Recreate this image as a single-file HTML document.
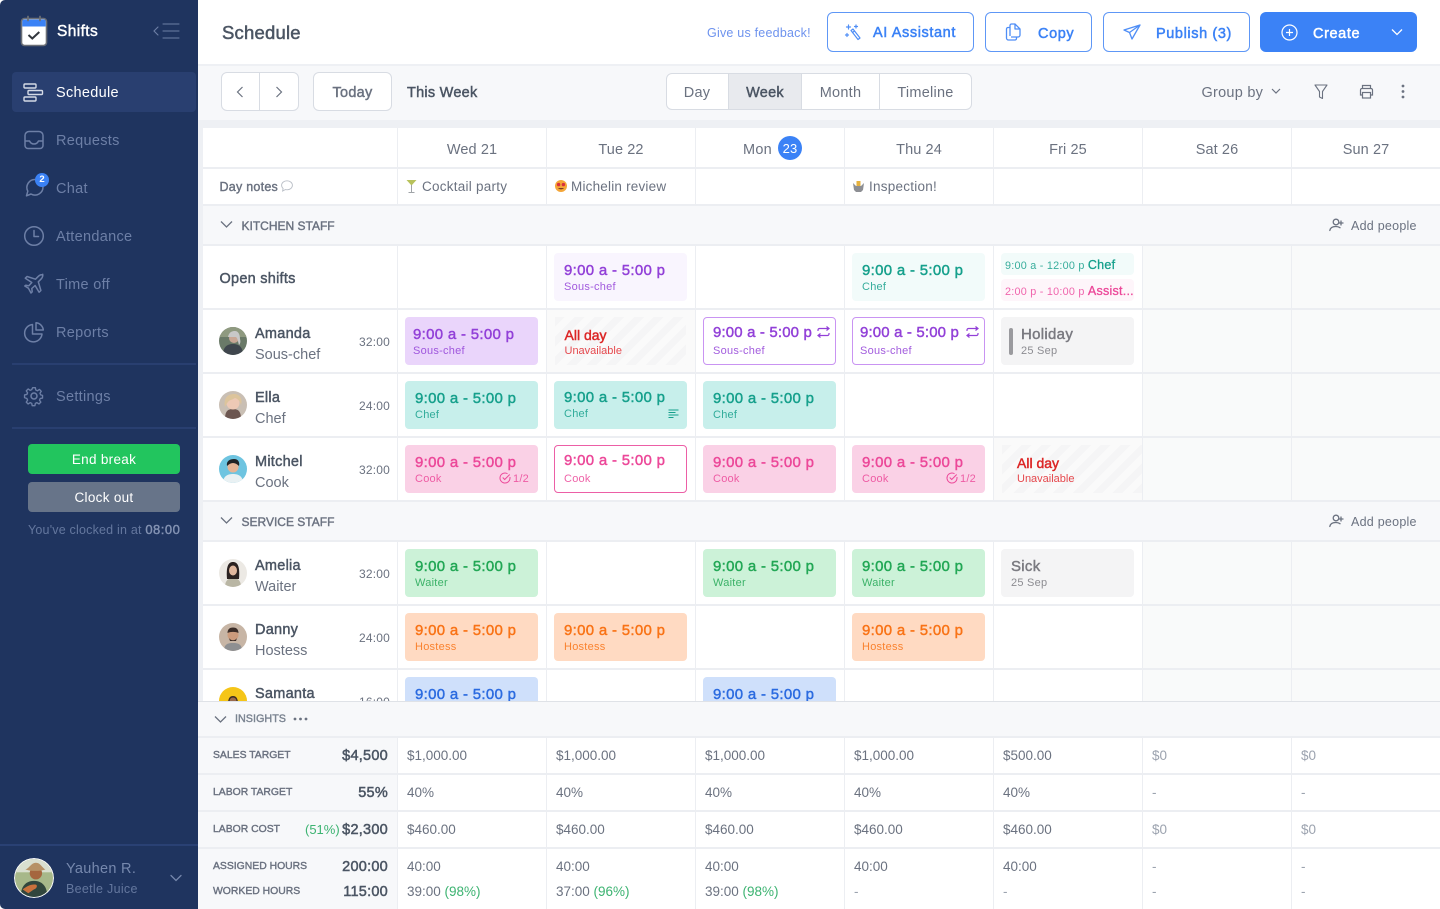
<!DOCTYPE html>
<html lang="en"><head><meta charset="utf-8"><title>Shifts</title>
<style>
*{box-sizing:border-box}
html,body{margin:0;padding:0;width:1440px;height:909px;overflow:hidden;background:#fff}
body{position:relative;font-family:"Liberation Sans",sans-serif;color:#4b5563}
.a{position:absolute}
.t{position:absolute;line-height:20px;margin-top:-10px;white-space:nowrap;font-size:14.5px;letter-spacing:.25px}
.m{-webkit-text-stroke:.45px currentColor}
.c{transform:translateX(-50%)}
svg{position:absolute;overflow:visible}
svg.ph{overflow:hidden;border-radius:50%}
.n{color:#6d7fa6;left:56px;font-size:14.5px;letter-spacing:.3px}
.ic{fill:none;stroke:#6d7fa6;stroke-width:1.5;stroke-linecap:round;stroke-linejoin:round}
.btn{position:absolute;top:12px;height:40px;border:1.5px solid #5e97f6;border-radius:6px;background:#fff}
.bt{color:#3b82f6;font-size:14.5px;letter-spacing:.6px;-webkit-text-stroke:.5px currentColor}
.hl{position:absolute;background:#eceef2}
.s{position:absolute;width:133px;height:48px;border-radius:4px;overflow:hidden}
.s b{position:absolute;left:10px;top:8px;line-height:20px;font-size:15px;font-weight:400;letter-spacing:.3px;-webkit-text-stroke:.45px currentColor;white-space:nowrap}
.s i{position:absolute;left:10px;top:27px;line-height:14px;font-size:11px;font-style:normal;letter-spacing:.25px;white-space:nowrap;opacity:.85}
.pu{background:#ead5fb;color:#9240d8}.pl{background:#f9f5fe;color:#9240d8}
.po{background:#fff;border:1.5px solid #c994f2;color:#9240d8}
.po b{letter-spacing:.15px}
.te{background:#c7efeb;color:#16a08c}.tl{background:#f2fbfa;color:#16a08c}
.pk{background:#fad1e6;color:#ec4899}.pw{background:#fff;border:1.5px solid #ec5fa6;color:#ec4899}
.gr{background:#ccf2d8;color:#22a755}.or{background:#ffdac2;color:#f97316}
.bl{background:#cfe0fb;color:#2b6be0}.gy{background:#f4f4f5;color:#7a7a80}
.st{position:absolute;height:48px;background:repeating-linear-gradient(135deg,#f5f5f6 0 7px,#fafafa 7px 14px)}
.head{color:#6b7280;font-size:14.5px;letter-spacing:.1px}
.name{left:255px;font-size:14.5px;color:#4b5563;-webkit-text-stroke:.45px currentColor}
.role{left:255px;font-size:14.5px;color:#6b7280;letter-spacing:0}
.hrs{left:359px;font-size:12px;color:#6b7280;letter-spacing:.2px}
.sec{font-size:12px;color:#6b7280;letter-spacing:0;-webkit-text-stroke:.4px currentColor}
.lab{left:213px;font-size:10.4px;color:#6b7280;letter-spacing:0;-webkit-text-stroke:.4px currentColor}
.tot{right:1052px;font-size:14.5px;color:#4b5563;-webkit-text-stroke:.5px currentColor}
.v{font-size:13.5px;color:#6b7280;letter-spacing:0}
.f{color:#9ca3af}
.ga{fill:none;stroke:#6b7280;stroke-width:1.3;stroke-linecap:round;stroke-linejoin:round}
</style></head><body>

<!-- backgrounds -->
<div class="a" style="left:198px;top:64px;width:1242px;height:845px;background:#eef0f4"></div>
<div class="a" style="left:198px;top:0;width:1242px;height:64px;background:#fff"></div>
<div class="a" style="left:198px;top:66px;width:1242px;height:54px;background:#f7f8fa"></div>
<div class="a" style="left:203px;top:128px;width:1237px;height:573px;background:#fff"></div>
<div class="a" style="left:1142px;top:245px;width:298px;height:456px;background:#f9fafa"></div>
<div class="a" style="left:203px;top:205px;width:1237px;height:40px;background:#f7f8fa"></div>
<div class="a" style="left:203px;top:501px;width:1237px;height:40px;background:#f7f8fa"></div>
<div class="a" style="left:546px;top:309px;width:149px;height:64px;background:#fafafa"></div>
<div class="a" style="left:993px;top:437px;width:149px;height:64px;background:#fafafa"></div>

<!-- grid lines -->
<div class="hl" style="left:203px;top:167px;width:1237px;height:2px"></div>
<div class="hl" style="left:203px;top:204px;width:1237px;height:1.5px"></div>
<div class="hl" style="left:203px;top:244px;width:1237px;height:2px"></div>
<div class="hl" style="left:203px;top:308px;width:1237px;height:2px"></div>
<div class="hl" style="left:203px;top:372px;width:1237px;height:2px"></div>
<div class="hl" style="left:203px;top:436px;width:1237px;height:2px"></div>
<div class="hl" style="left:203px;top:500px;width:1237px;height:1.5px"></div>
<div class="hl" style="left:203px;top:540px;width:1237px;height:2px"></div>
<div class="hl" style="left:203px;top:604px;width:1237px;height:2px"></div>
<div class="hl" style="left:203px;top:668px;width:1237px;height:2px"></div>
<div class="hl" style="left:396.5px;top:128px;width:1.3px;height:77px"></div>
<div class="hl" style="left:545.5px;top:128px;width:1.3px;height:77px"></div>
<div class="hl" style="left:694.5px;top:128px;width:1.3px;height:77px"></div>
<div class="hl" style="left:843.5px;top:128px;width:1.3px;height:77px"></div>
<div class="hl" style="left:992.5px;top:128px;width:1.3px;height:77px"></div>
<div class="hl" style="left:1141.5px;top:128px;width:1.3px;height:77px"></div>
<div class="hl" style="left:1290.5px;top:128px;width:1.3px;height:77px"></div>
<div class="hl" style="left:397px;top:245px;width:1.3px;height:256px"></div>
<div class="hl" style="left:546px;top:245px;width:1.3px;height:256px"></div>
<div class="hl" style="left:695px;top:245px;width:1.3px;height:256px"></div>
<div class="hl" style="left:844px;top:245px;width:1.3px;height:256px"></div>
<div class="hl" style="left:993px;top:245px;width:1.3px;height:256px"></div>
<div class="hl" style="left:1142px;top:245px;width:1.3px;height:256px"></div>
<div class="hl" style="left:1291px;top:245px;width:1.3px;height:256px"></div>
<div class="hl" style="left:397px;top:541px;width:1.3px;height:160px"></div>
<div class="hl" style="left:546px;top:541px;width:1.3px;height:160px"></div>
<div class="hl" style="left:695px;top:541px;width:1.3px;height:160px"></div>
<div class="hl" style="left:844px;top:541px;width:1.3px;height:160px"></div>
<div class="hl" style="left:993px;top:541px;width:1.3px;height:160px"></div>
<div class="hl" style="left:1142px;top:541px;width:1.3px;height:160px"></div>
<div class="hl" style="left:1291px;top:541px;width:1.3px;height:160px"></div>

<!-- sidebar -->
<div class="a" style="left:0;top:0;width:198px;height:909px;background:#1f345f;border-radius:5px 0 0 5px"></div>
<svg style="left:20px;top:15px" width="28" height="32" viewBox="0 0 28 32"><rect x="1.5" y="3.5" width="25" height="27" rx="3" fill="#fff" stroke="#6b6f76" stroke-width="1.6"/><path d="M2.3 6.5a2 2 0 0 1 2-2h19.4a2 2 0 0 1 2 2v5H2.3z" fill="#3b82f6"/><path d="M8 1.5v4M20 1.5v4" stroke="#6b6f76" stroke-width="1.8" stroke-linecap="round"/><path d="M8.5 20l3.8 3.5 7-6.5" fill="none" stroke="#33373d" stroke-width="2"/></svg>
<div class="t" style="left:57px;top:32px;color:#fff;font-size:15.5px;-webkit-text-stroke:.45px #fff;letter-spacing:.4px">Shifts</div>
<svg style="left:152px;top:23px" width="28" height="16" viewBox="0 0 28 16"><path d="M6 4L2 8l4 4M11 1h16M11 8h16M11 15h16" fill="none" stroke="#6d7fa6" stroke-width="1.1" stroke-linecap="round"/></svg>

<div class="a" style="left:12px;top:72px;width:184px;height:40px;background:#293f70;border-radius:4px"></div>
<svg style="left:23px;top:83px" width="21" height="19" viewBox="0 0 21 19"><g fill="none" stroke="#d4dae6" stroke-width="1.4"><rect x="1" y="1" width="12" height="4" rx="1"/><rect x="5" y="7.5" width="14.5" height="4" rx="1"/><rect x="1" y="14" width="12" height="4" rx="1"/></g></svg>
<div class="t" style="left:56px;top:93px;color:#fff;font-size:14.5px;letter-spacing:.3px">Schedule</div>

<svg class="ic" style="left:24px;top:130px" width="20" height="20" viewBox="0 0 20 20"><path d="M1 11V5.5A4 4 0 0 1 5 1.5h10a4 4 0 0 1 4 4V11M1 11v4.5a3 3 0 0 0 3 3h12a3 3 0 0 0 3-3V11h-4.5c-1 2-2.5 3-4.500 3s-3.500-1-4.500-3z"/></svg>
<div class="t n" style="top:141px">Requests</div>

<svg class="ic" style="left:25px;top:178px" width="20" height="20" viewBox="0 0 20 20"><path d="M18 9a8 8 0 0 1-12 7l-4.500 1.800 1.300-4.600A8 8 0 0 1 10 1.500"/></svg>
<div class="a" style="left:35px;top:173px;width:14px;height:14px;border-radius:50%;background:#3b82f6;color:#fff;font-size:9.5px;font-weight:bold;text-align:center;line-height:14px">2</div>
<div class="t n" style="top:189px">Chat</div>

<svg class="ic" style="left:24px;top:226px" width="20" height="20" viewBox="0 0 20 20"><circle cx="10" cy="10" r="9.3"/><path d="M10 4.5V10.500h4.500"/></svg>
<div class="t n" style="top:237px">Attendance</div>

<svg class="ic" style="left:24px;top:274px" width="20" height="20" viewBox="0 0 20 20"><path d="M18.700 1.300c-1.300-1-3-.3-4.300 1L11.500 5.200 3 2.500 1.300 4.200l6.500 4.300-3 3.300-3-.6L.8 12l3.600 2.200L7 19l1.200-1.200-.4-3.300 3.300-3 4 6.700 1.800-1.700-2.600-8.700 3-3c1.200-1.200 1.700-3.300 1.400-4.500z"/></svg>
<div class="t n" style="top:285px">Time off</div>

<svg class="ic" style="left:24px;top:322px" width="20" height="20" viewBox="0 0 20 20"><path d="M8.500 2.500a8.700 8.700 0 1 0 9.500 9.500H8.500zM12 .8A8 8 0 0 1 19.300 8H12z"/></svg>
<div class="t n" style="top:333px">Reports</div>

<div class="a" style="left:12px;top:363px;width:184px;height:2px;background:#293f70"></div>
<svg class="ic" style="left:24px;top:386px" width="20" height="20" viewBox="0 0 20 20"><circle cx="10" cy="10" r="3"/><path d="M8.500 1h3l.5 2.600 1.800.8 2.200-1.500 2.100 2.100-1.500 2.200.8 1.800L19.500 9.500v3l-2.600.5-.8 1.800 1.500 2.200-2.100 2.100-2.200-1.500-1.800.8-.5 2.600h-3L7.500 18.400l-1.800-.8-2.200 1.500-2.100-2.100 1.500-2.200-.8-1.800L-.5 12V9l2.600-.5.800-1.800L1.400 4.500 3.500 2.400l2.200 1.500 1.800-.8z" transform="translate(1 .8) scale(.9)"/></svg>
<div class="t n" style="top:397px">Settings</div>
<div class="a" style="left:12px;top:427px;width:184px;height:2px;background:#293f70"></div>

<div class="a" style="left:28px;top:444px;width:152px;height:30px;border-radius:4px;background:#22c55e"></div>
<div class="t c" style="left:104px;top:460px;color:#fff;font-size:13.5px;letter-spacing:.3px">End break</div>
<div class="a" style="left:28px;top:482px;width:152px;height:30px;border-radius:4px;background:#677489"></div>
<div class="t c" style="left:104px;top:498px;color:#fff;font-size:13.5px;letter-spacing:.3px">Clock out</div>
<div class="t" style="left:28px;top:530px;color:#64779e;font-size:12.5px;letter-spacing:.2px">You've clocked in at <span style="-webkit-text-stroke:.4px currentColor;color:#8493b3;font-size:13px;letter-spacing:.5px">08:00</span></div>

<div class="a" style="left:0;top:844px;width:198px;height:1.5px;background:#2a4174"></div>
<svg class="ph" style="left:14px;top:858px" width="40" height="40" viewBox="0 0 40 40"><circle cx="20" cy="20" r="20" fill="#fff"/><g transform="translate(1 1) scale(.95)"><clipPath id="u"><circle cx="20" cy="20" r="20"/></clipPath><g clip-path="url(#u)"><rect width="40" height="40" fill="#a7b88a"/><rect width="40" height="14" fill="#d9dfd0"/><path d="M6 40c0-12 6-17 14-17s14 5 14 17z" fill="#31463d"/><circle cx="22" cy="15" r="6.500" fill="#a5663f"/><path d="M11 11c4-1 6-7 11-7s6 5 10 7c-6 2-15 2-21 0z" fill="#b69166"/><path d="M8 32c4-3 9-6 14-5 2 1 1 4-2 5l-6 4z" fill="#c9713c"/></g></g></svg>
<div class="t" style="left:66px;top:869px;color:#7688ad;font-size:14.5px;letter-spacing:.3px">Yauhen R.</div>
<div class="t" style="left:66px;top:889px;color:#64779e;font-size:12.5px;letter-spacing:.3px">Beetle Juice</div>
<svg style="left:170px;top:874px" width="12" height="8" viewBox="0 0 12 8"><path d="M1 1.500l5 5 5-5" fill="none" stroke="#7688ad" stroke-width="1.300" stroke-linecap="round"/></svg>

<!-- header -->
<div class="t" style="left:222px;top:32.500px;font-size:18.500px;color:#4b5563;-webkit-text-stroke:.5px currentColor;letter-spacing:.2px">Schedule</div>
<div class="t" style="left:707px;top:33px;color:#6e93ee;font-size:12.5px;letter-spacing:.22px">Give us feedback!</div>
<div class="btn" style="left:827px;width:147px"></div>
<svg style="left:845px;top:24px" width="17" height="17" viewBox="0 0 17 17"><g fill="none" stroke="#4f8ef6" stroke-width="1.200" stroke-linecap="round" stroke-linejoin="round"><path d="M6 6.500l2-1.500 7 9-2 1.500zM7.500 8.500l2-1.500"/><path d="M3.500 1v4M1.500 3h4M11 1v3M9.500 2.500h3M2 9.500v3M.5 11h3"/></g></svg>
<div class="t bt" style="left:873px;top:33px">AI Assistant</div>
<div class="btn" style="left:985px;width:107px"></div>
<svg style="left:1005px;top:23px" width="17" height="18" viewBox="0 0 17 18"><g fill="none" stroke="#4f8ef6" stroke-width="1.300" stroke-linejoin="round"><path d="M5 13V2.500A1.500 1.500 0 0 1 6.500 1H10l5 5v6a2 2 0 0 1-2 2H6"/><path d="M10 1v5h5"/><path d="M5 4.500H3A1.500 1.500 0 0 0 1.500 6v9A2 2 0 0 0 3.500 17H10a1.500 1.500 0 0 0 1.500-1.500V14"/></g></svg>
<div class="t bt" style="left:1038px;top:33.500px">Copy</div>
<div class="btn" style="left:1103px;width:147px"></div>
<svg style="left:1123px;top:24px" width="18" height="17" viewBox="0 0 18 17"><path d="M17 1L1 6l5.500 2.500L9 15zM6.500 8.500L17 1" fill="none" stroke="#4f8ef6" stroke-width="1.300" stroke-linejoin="round"/></svg>
<div class="t bt" style="left:1156px;top:33.500px">Publish (3)</div>
<div class="a" style="left:1260px;top:12px;width:157px;height:40px;border-radius:6px;background:#3b82f6"></div>
<svg style="left:1281px;top:24px" width="17" height="17" viewBox="0 0 17 17"><circle cx="8.500" cy="8.500" r="7.500" fill="none" stroke="#fff" stroke-width="1.200"/><path d="M8.500 5v7M5 8.500h7" stroke="#fff" stroke-width="1.200"/></svg>
<div class="t bt" style="left:1313px;top:33.500px;color:#fff">Create</div>
<svg style="left:1391px;top:28px" width="12" height="8" viewBox="0 0 12 8"><path d="M1 1.500l5 5 5-5" fill="none" stroke="#fff" stroke-width="1.300"/></svg>

<!-- toolbar -->
<div class="a" style="left:221px;top:72px;width:78px;height:39px;background:#fff;border:1px solid #d8dce3;border-radius:6px"></div>
<div class="a" style="left:259px;top:72px;width:1px;height:39px;background:#d8dce3"></div>
<svg style="left:236px;top:86px" width="8" height="12" viewBox="0 0 8 12"><path d="M6.500 1L1.500 6l5 5" fill="none" stroke="#6b7280" stroke-width="1.200"/></svg>
<svg style="left:275px;top:86px" width="8" height="12" viewBox="0 0 8 12"><path d="M1.500 1l5 5-5 5" fill="none" stroke="#6b7280" stroke-width="1.200"/></svg>
<div class="a" style="left:313px;top:72px;width:79px;height:39px;background:#fff;border:1px solid #d8dce3;border-radius:6px"></div>
<div class="t c m" style="left:352.500px;top:92.500px;color:#6b7280;font-size:14.5px">Today</div>
<div class="t m" style="left:407px;top:92.500px;color:#4b5563;font-size:14.5px">This Week</div>

<div class="a" style="left:666px;top:73px;width:306px;height:37px;background:#fff;border:1px solid #d8dce3;border-radius:6px;overflow:hidden"><div class="a" style="left:61px;top:0;width:73px;height:35px;background:#e8eaee"></div></div>
<div class="a" style="left:728px;top:73px;width:1px;height:37px;background:#d8dce3"></div>
<div class="a" style="left:801px;top:73px;width:1px;height:37px;background:#d8dce3"></div>
<div class="a" style="left:879px;top:73px;width:1px;height:37px;background:#d8dce3"></div>
<div class="t c" style="left:697px;top:92.500px;color:#6b7280;font-size:14.5px">Day</div>
<div class="t c m" style="left:765px;top:92.500px;color:#4b5563;font-size:14.5px">Week</div>
<div class="t c" style="left:840.500px;top:92.500px;color:#6b7280;font-size:14.5px">Month</div>
<div class="t c" style="left:925.500px;top:92.500px;color:#6b7280;font-size:14.5px">Timeline</div>
<div class="t" style="left:1201.500px;top:92.500px;color:#6b7280;font-size:14.5px">Group by</div>
<svg style="left:1271px;top:88px" width="10" height="7" viewBox="0 0 10 7"><path d="M1 1l4 4 4-4" fill="none" stroke="#6b7280" stroke-width="1.200"/></svg>
<svg style="left:1314px;top:84px" width="14" height="16" viewBox="0 0 14 16"><path d="M1 1h12L8.500 7.500v7L5.500 13V7.500z" fill="none" stroke="#6b7280" stroke-width="1.100" stroke-linejoin="round"/></svg>
<svg style="left:1359px;top:84px" width="15" height="15" viewBox="0 0 15 15"><g fill="none" stroke="#6b7280" stroke-width="1.200"><path d="M3.500 4.500V1.500h8v3M3.500 11H1.500V6a1.500 1.500 0 0 1 1.500-1.500h9A1.500 1.500 0 0 1 13.500 6v5h-2"/><rect x="3.500" y="8.500" width="8" height="5.500"/></g></svg>
<svg style="left:1401px;top:84px" width="4" height="15" viewBox="0 0 4 15"><g fill="#6b7280"><circle cx="2" cy="2" r="1.400"/><circle cx="2" cy="7.500" r="1.400"/><circle cx="2" cy="13" r="1.400"/></g></svg>

<!-- day header -->
<div class="t c head" style="left:472px;top:149.500px">Wed 21</div>
<div class="t c head" style="left:621px;top:149.500px">Tue 22</div>
<div class="t head" style="left:743px;top:149.500px;letter-spacing:.25px">Mon</div>
<div class="a" style="left:778px;top:136px;width:24px;height:24px;border-radius:50%;background:#3b82f6;color:#fff;font-size:13px;text-align:center;line-height:25px;letter-spacing:.2px">23</div>
<div class="t c head" style="left:919px;top:149.500px">Thu 24</div>
<div class="t c head" style="left:1068px;top:149.500px">Fri 25</div>
<div class="t c head" style="left:1217px;top:149.500px">Sat 26</div>
<div class="t c head" style="left:1366px;top:149.500px">Sun 27</div>

<!-- notes -->
<div class="t" style="left:219.500px;top:187px;font-size:12.5px;color:#6b7280;-webkit-text-stroke:.4px currentColor">Day notes</div>
<svg style="left:281px;top:180px" width="12" height="12" viewBox="0 0 12 12"><path d="M6 .8C2.900.8.600 2.800.600 5.300c0 1.300.6 2.400 1.500 3.200L1.600 11l2.700-1.400c.5.100 1.100.2 1.700.2 3.100 0 5.400-2 5.400-4.500S9.100.8 6 .8z" fill="none" stroke="#b9bec6" stroke-width=".9"/></svg>
<svg style="left:406px;top:180px" width="11" height="13" viewBox="0 0 11 13"><path d="M.5 0h10L5.500 5.500z" fill="#b8c25c"/><path d="M5.500 5v7M2.500 12.500h6" stroke="#a0a4a8" stroke-width="1"/></svg>
<div class="t" style="left:422px;top:186.500px;font-size:13.5px;color:#6b7280;letter-spacing:.25px">Cocktail party</div>
<svg style="left:555px;top:180px" width="12" height="12" viewBox="0 0 12 12"><circle cx="6" cy="6" r="6" fill="#f4a638"/><circle cx="3.600" cy="4.600" r="1.700" fill="#d92f3d"/><circle cx="8.400" cy="4.600" r="1.700" fill="#d92f3d"/><path d="M3 8c1.500 1.800 4.500 1.800 6 0z" fill="#7a3a20"/></svg>
<div class="t" style="left:571px;top:186.500px;font-size:13.5px;color:#6b7280;letter-spacing:.2px">Michelin review</div>
<svg style="left:852px;top:180px" width="13" height="13" viewBox="0 0 13 13"><path d="M1 3l3 3h5l3-3-1 7-2 2H4l-2-2z" fill="#8d8f94"/><rect x="4.500" y="1" width="4" height="5" fill="#e6b23e"/></svg>
<div class="t" style="left:869px;top:186.500px;font-size:13.5px;color:#6b7280;letter-spacing:.25px">Inspection!</div>

<!-- section headers -->
<svg style="left:220px;top:220px" width="13" height="9" viewBox="0 0 13 9"><path d="M1 1.500l5.500 5.500L12 1.500" fill="none" stroke="#6b7280" stroke-width="1.300"/></svg>
<div class="t sec" style="left:241.500px;top:225.500px">KITCHEN STAFF</div>
<svg class="ga" style="left:1329px;top:218px" width="15" height="14" viewBox="0 0 15 14"><circle cx="7" cy="4" r="2.800"/><path d="M.8 12.500c.5-3 3-4 6-4 1.500 0 3 .3 4.200 1.200M12 3v4M10 5h4"/></svg>
<div class="t" style="left:1351px;top:226px;font-size:12.5px;color:#6b7280;letter-spacing:.25px">Add people</div>
<svg style="left:220px;top:516px" width="13" height="9" viewBox="0 0 13 9"><path d="M1 1.500l5.500 5.500L12 1.500" fill="none" stroke="#6b7280" stroke-width="1.300"/></svg>
<div class="t sec" style="left:241.500px;top:521.500px">SERVICE STAFF</div>
<svg class="ga" style="left:1329px;top:514px" width="15" height="14" viewBox="0 0 15 14"><circle cx="7" cy="4" r="2.800"/><path d="M.8 12.500c.5-3 3-4 6-4 1.500 0 3 .3 4.200 1.200M12 3v4M10 5h4"/></svg>
<div class="t" style="left:1351px;top:522px;font-size:12.5px;color:#6b7280;letter-spacing:.25px">Add people</div>

<!-- people -->
<div class="t m" style="left:219.500px;top:278.500px;font-size:14.5px;color:#4b5563">Open shifts</div>

<svg class="ph" style="left:219px;top:327px" width="28" height="28" viewBox="0 0 28 28"><rect width="28" height="28" fill="#6a7a68"/><rect width="28" height="10" fill="#8f9a80"/><path d="M4 28c0-8 4-11 10-11s10 3 10 11z" fill="#3f464d"/><circle cx="15" cy="11" r="5" fill="#c9a795"/><path d="M9 10c1-5 4-6 7-6s5 3 5 8c1 3 0 5-1 6-1-3-1-6-3-8-3 0-6 0-8 0z" fill="#c8c8c8"/></svg>
<div class="t name" style="top:333.500px">Amanda</div><div class="t role" style="top:354.500px">Sous-chef</div><div class="t hrs" style="top:342px">32:00</div>

<svg class="ph" style="left:219px;top:391px" width="28" height="28" viewBox="0 0 28 28"><rect width="28" height="28" fill="#c9bfb4"/><path d="M6 28c0-8 3-10 8-10s8 2 8 10z" fill="#6c5650"/><circle cx="14" cy="12" r="6.500" fill="#edc9b5"/><path d="M6 16C4 6 10 3 15 3s9 4 7 11c-1-4-3-6-6-7-3 2-6 2-7 4-1 1-2 3-3 5z" fill="#dcc49b"/></svg>
<div class="t name" style="top:397.500px">Ella</div><div class="t role" style="top:418.500px">Chef</div><div class="t hrs" style="top:406px">24:00</div>

<svg class="ph" style="left:219px;top:455px" width="28" height="28" viewBox="0 0 28 28"><rect width="28" height="28" fill="#6ec4e0"/><path d="M4 28c0-7 5-9 10-9s10 2 10 9z" fill="#e9f1f3"/><circle cx="14" cy="12" r="5.500" fill="#e5b596"/><path d="M8 11c-1-5 3-7 7-7s6 3 5 7c-2-2-4-3-6-3s-4 1-6 3z" fill="#1f2326"/></svg>
<div class="t name" style="top:461.500px">Mitchel</div><div class="t role" style="top:482.500px">Cook</div><div class="t hrs" style="top:470px">32:00</div>

<svg class="ph" style="left:219px;top:559px" width="28" height="28" viewBox="0 0 28 28"><rect width="28" height="28" fill="#ece9e4"/><path d="M6 28c0-7 4-9 8-9s8 2 8 9z" fill="#b9b6a4"/><path d="M8 20C7 8 9 3 14 3s7 5 6 17z" fill="#2b2220"/><ellipse cx="14" cy="11.500" rx="4" ry="5" fill="#e0b79d"/></svg>
<div class="t name" style="top:565.500px">Amelia</div><div class="t role" style="top:586.500px">Waiter</div><div class="t hrs" style="top:574px">32:00</div>

<svg class="ph" style="left:219px;top:623px" width="28" height="28" viewBox="0 0 28 28"><rect width="28" height="28" fill="#c7b5a5"/><path d="M5 28c0-7 4-8 9-8s9 1 9 8z" fill="#8e8f91"/><circle cx="14" cy="12" r="5.500" fill="#cc9b7c"/><path d="M8.500 10c0-4 2.500-5.500 5.500-5.500s5.500 1.500 5.500 5.500c-3-1.500-8-1.500-11 0zM10 15c2 3 6 3 8 0l-1 3h-6z" fill="#3b2d28"/></svg>
<div class="t name" style="top:629.500px">Danny</div><div class="t role" style="top:650.500px">Hostess</div><div class="t hrs" style="top:638px">24:00</div>

<svg class="ph" style="left:219px;top:687px" width="28" height="28" viewBox="0 0 28 28"><rect width="28" height="28" fill="#f5c518"/><path d="M9 17c0-6 2-8 5-8s5 2 5 8z" fill="#3a2a22"/><circle cx="14" cy="14" r="3.500" fill="#9a6b4f"/></svg>
<div class="t name" style="top:693.500px">Samanta</div><div class="t hrs" style="top:702px">16:00</div>

<!-- shifts kitchen -->
<div class="s pl" style="left:554px;top:253px"><b>9:00 a - 5:00 p</b><i>Sous-chef</i></div>
<div class="s tl" style="left:852px;top:253px"><b>9:00 a - 5:00 p</b><i>Chef</i></div>
<div class="a" style="left:1001px;top:253px;width:133px;height:22px;border-radius:4px;background:#f2fbfa"></div>
<div class="t" style="left:1005px;top:264.500px;font-size:10.8px;color:#38ad9c">9:00 a - 12:00 p <span style="font-size:12.5px;color:#16a08c;-webkit-text-stroke:.3px currentColor">Chef</span></div>
<div class="a" style="left:1001px;top:279px;width:133px;height:22px;border-radius:4px;background:#fef5fa"></div>
<div class="t" style="left:1005px;top:290.500px;font-size:10.8px;color:#f065ad">2:00 p - 10:00 p <span style="font-size:12.5px;color:#ec4899;-webkit-text-stroke:.3px currentColor">Assist...</span></div>

<div class="s pu" style="left:405px;top:317px"><b style="left:8px">9:00 a - 5:00 p</b><i style="left:8px">Sous-chef</i></div>
<div class="st" style="left:555px;top:317px;width:131px"></div>
<div class="t m" style="left:564.500px;top:335px;font-size:14px;color:#dc2626;letter-spacing:0">All day</div>
<div class="t" style="left:564.500px;top:351px;font-size:11px;color:#e5484d;letter-spacing:0">Unavailable</div>
<div class="s po" style="left:703px;top:317px"><b style="left:9px;top:5px">9:00 a - 5:00 p</b><i style="left:9px;top:26px">Sous-chef</i><svg style="left:113px;top:8px" width="13" height="12" viewBox="0 0 13 12"><path d="M1 5V4a1.500 1.500 0 0 1 1.500-1.500H12M9.500.5l2.500 2-2.500 2M12 7v1a1.500 1.500 0 0 1-1.500 1.500H1M3.500 7.500L1 9.500l2.500 2" fill="none" stroke="#9240d8" stroke-width="1.200"/></svg></div>
<div class="s po" style="left:852px;top:317px"><b style="left:7px;top:5px">9:00 a - 5:00 p</b><i style="left:7px;top:26px">Sous-chef</i><svg style="left:113px;top:8px" width="13" height="12" viewBox="0 0 13 12"><path d="M1 5V4a1.500 1.500 0 0 1 1.500-1.500H12M9.500.5l2.500 2-2.500 2M12 7v1a1.500 1.500 0 0 1-1.500 1.500H1M3.500 7.500L1 9.500l2.500 2" fill="none" stroke="#9240d8" stroke-width="1.200"/></svg></div>
<div class="s gy" style="left:1001px;top:317px"><div class="a" style="left:8px;top:11px;width:4px;height:27px;border-radius:2px;background:#9a9a9e"></div><b style="left:20px;top:8px">Holiday</b><i style="left:20px;top:27px">25 Sep</i></div>

<div class="s te" style="left:405px;top:381px"><b>9:00 a - 5:00 p</b><i>Chef</i></div>
<div class="s te" style="left:554px;top:381px"><b style="top:7px">9:00 a - 5:00 p</b><i style="top:26px">Chef</i><svg style="left:114px;top:28px" width="11" height="9" viewBox="0 0 11 9"><path d="M.5 1h10M.5 3.500h7M.5 6h10M.5 8.500h5" stroke="#16a08c" stroke-width="1"/></svg></div>
<div class="s te" style="left:703px;top:381px"><b>9:00 a - 5:00 p</b><i>Chef</i></div>

<div class="s pk" style="left:405px;top:445px"><b>9:00 a - 5:00 p</b><i>Cook</i><svg style="left:94px;top:27px" width="12" height="12" viewBox="0 0 12 12"><path d="M11 5v1a5 5 0 1 1-2.500-4.300M3.700 5.500l2 2 5-5" fill="none" stroke="#ec4899" stroke-width="1"/></svg><i style="left:108px;font-size:11px">1/2</i></div>
<div class="s pw" style="left:554px;top:445px"><b style="left:9px;top:5px">9:00 a - 5:00 p</b><i style="left:9px;top:26px">Cook</i></div>
<div class="s pk" style="left:703px;top:445px"><b>9:00 a - 5:00 p</b><i>Cook</i></div>
<div class="s pk" style="left:852px;top:445px"><b>9:00 a - 5:00 p</b><i>Cook</i><svg style="left:94px;top:27px" width="12" height="12" viewBox="0 0 12 12"><path d="M11 5v1a5 5 0 1 1-2.500-4.300M3.700 5.500l2 2 5-5" fill="none" stroke="#ec4899" stroke-width="1"/></svg><i style="left:108px;font-size:11px">1/2</i></div>
<div class="st" style="left:1002px;top:445px;width:140px"></div>
<div class="t m" style="left:1017px;top:463px;font-size:14px;color:#dc2626;letter-spacing:0">All day</div>
<div class="t" style="left:1017px;top:479px;font-size:11px;color:#e5484d;letter-spacing:0">Unavailable</div>

<!-- service -->
<div class="s gr" style="left:405px;top:549px"><b>9:00 a - 5:00 p</b><i>Waiter</i></div>
<div class="s gr" style="left:703px;top:549px"><b>9:00 a - 5:00 p</b><i>Waiter</i></div>
<div class="s gr" style="left:852px;top:549px"><b>9:00 a - 5:00 p</b><i>Waiter</i></div>
<div class="s gy" style="left:1001px;top:549px"><b>Sick</b><i>25 Sep</i></div>
<div class="s or" style="left:405px;top:613px"><b>9:00 a - 5:00 p</b><i>Hostess</i></div>
<div class="s or" style="left:554px;top:613px"><b>9:00 a - 5:00 p</b><i>Hostess</i></div>
<div class="s or" style="left:852px;top:613px"><b>9:00 a - 5:00 p</b><i>Hostess</i></div>
<div class="s bl" style="left:405px;top:677px"><b>9:00 a - 5:00 p</b></div>
<div class="s bl" style="left:703px;top:677px"><b>9:00 a - 5:00 p</b></div>

<!-- insights -->
<div class="a" style="left:198px;top:701px;width:1242px;height:208px;background:#fff;border-top:1px solid #dfe2e7"></div>
<div class="a" style="left:198px;top:702px;width:1242px;height:35px;background:#f7f8fa"></div>
<div class="a" style="left:198px;top:737px;width:199px;height:172px;background:#f7f8fa"></div>
<div class="hl" style="left:198px;top:736px;width:1242px;height:2px"></div>
<div class="hl" style="left:198px;top:773px;width:1242px;height:2px"></div>
<div class="hl" style="left:198px;top:810px;width:1242px;height:2px"></div>
<div class="hl" style="left:198px;top:847px;width:1242px;height:2px"></div>
<div class="hl" style="left:397px;top:737px;width:1.3px;height:172px"></div>
<div class="hl" style="left:546px;top:737px;width:1.3px;height:172px"></div>
<div class="hl" style="left:695px;top:737px;width:1.3px;height:172px"></div>
<div class="hl" style="left:844px;top:737px;width:1.3px;height:172px"></div>
<div class="hl" style="left:993px;top:737px;width:1.3px;height:172px"></div>
<div class="hl" style="left:1142px;top:737px;width:1.3px;height:172px"></div>
<div class="hl" style="left:1291px;top:737px;width:1.3px;height:172px"></div>
<svg style="left:214px;top:715px" width="13" height="9" viewBox="0 0 13 9"><path d="M1 1.500l5.500 5.500L12 1.500" fill="none" stroke="#6b7280" stroke-width="1.300"/></svg>
<div class="t" style="left:235px;top:719px;font-size:10.8px;color:#7b8491;letter-spacing:0;-webkit-text-stroke:.4px currentColor">INSIGHTS</div>
<svg style="left:293px;top:717px" width="15" height="4" viewBox="0 0 15 4"><g fill="#6b7280"><circle cx="2" cy="2" r="1.400"/><circle cx="7.500" cy="2" r="1.400"/><circle cx="13" cy="2" r="1.400"/></g></svg>

<div class="t lab" style="top:755.500px">SALES TARGET</div><div class="t tot" style="top:756px">$4,500</div>
<div class="t lab" style="top:792.500px">LABOR TARGET</div><div class="t tot" style="top:793px">55%</div>
<div class="t lab" style="top:829.500px">LABOR COST</div><div class="t" style="left:305px;top:830px;font-size:13px;color:#3cb371;letter-spacing:0">(51%)</div><div class="t tot" style="top:830px">$2,300</div>
<div class="t lab" style="top:866.500px">ASSIGNED HOURS</div><div class="t tot" style="top:867px">200:00</div>
<div class="t lab" style="top:891.500px">WORKED HOURS</div><div class="t tot" style="top:892px">115:00</div>

<div class="t v" style="left:407px;top:756px">$1,000.00</div><div class="t v" style="left:556px;top:756px">$1,000.00</div><div class="t v" style="left:705px;top:756px">$1,000.00</div><div class="t v" style="left:854px;top:756px">$1,000.00</div><div class="t v" style="left:1003px;top:756px">$500.00</div><div class="t v f" style="left:1152px;top:756px">$0</div><div class="t v f" style="left:1301px;top:756px">$0</div>
<div class="t v" style="left:407px;top:793px">40%</div><div class="t v" style="left:556px;top:793px">40%</div><div class="t v" style="left:705px;top:793px">40%</div><div class="t v" style="left:854px;top:793px">40%</div><div class="t v" style="left:1003px;top:793px">40%</div><div class="t v f" style="left:1152px;top:793px">-</div><div class="t v f" style="left:1301px;top:793px">-</div>
<div class="t v" style="left:407px;top:830px">$460.00</div><div class="t v" style="left:556px;top:830px">$460.00</div><div class="t v" style="left:705px;top:830px">$460.00</div><div class="t v" style="left:854px;top:830px">$460.00</div><div class="t v" style="left:1003px;top:830px">$460.00</div><div class="t v f" style="left:1152px;top:830px">$0</div><div class="t v f" style="left:1301px;top:830px">$0</div>
<div class="t v" style="left:407px;top:867px">40:00</div><div class="t v" style="left:556px;top:867px">40:00</div><div class="t v" style="left:705px;top:867px">40:00</div><div class="t v" style="left:854px;top:867px">40:00</div><div class="t v" style="left:1003px;top:867px">40:00</div><div class="t v f" style="left:1152px;top:867px">-</div><div class="t v f" style="left:1301px;top:867px">-</div>
<div class="t v" style="left:407px;top:892px">39:00 <span style="color:#3cb371">(98%)</span></div><div class="t v" style="left:556px;top:892px">37:00 <span style="color:#3cb371">(96%)</span></div><div class="t v" style="left:705px;top:892px">39:00 <span style="color:#3cb371">(98%)</span></div><div class="t v f" style="left:854px;top:892px">-</div><div class="t v f" style="left:1003px;top:892px">-</div><div class="t v f" style="left:1152px;top:892px">-</div><div class="t v f" style="left:1301px;top:892px">-</div>

</body></html>
